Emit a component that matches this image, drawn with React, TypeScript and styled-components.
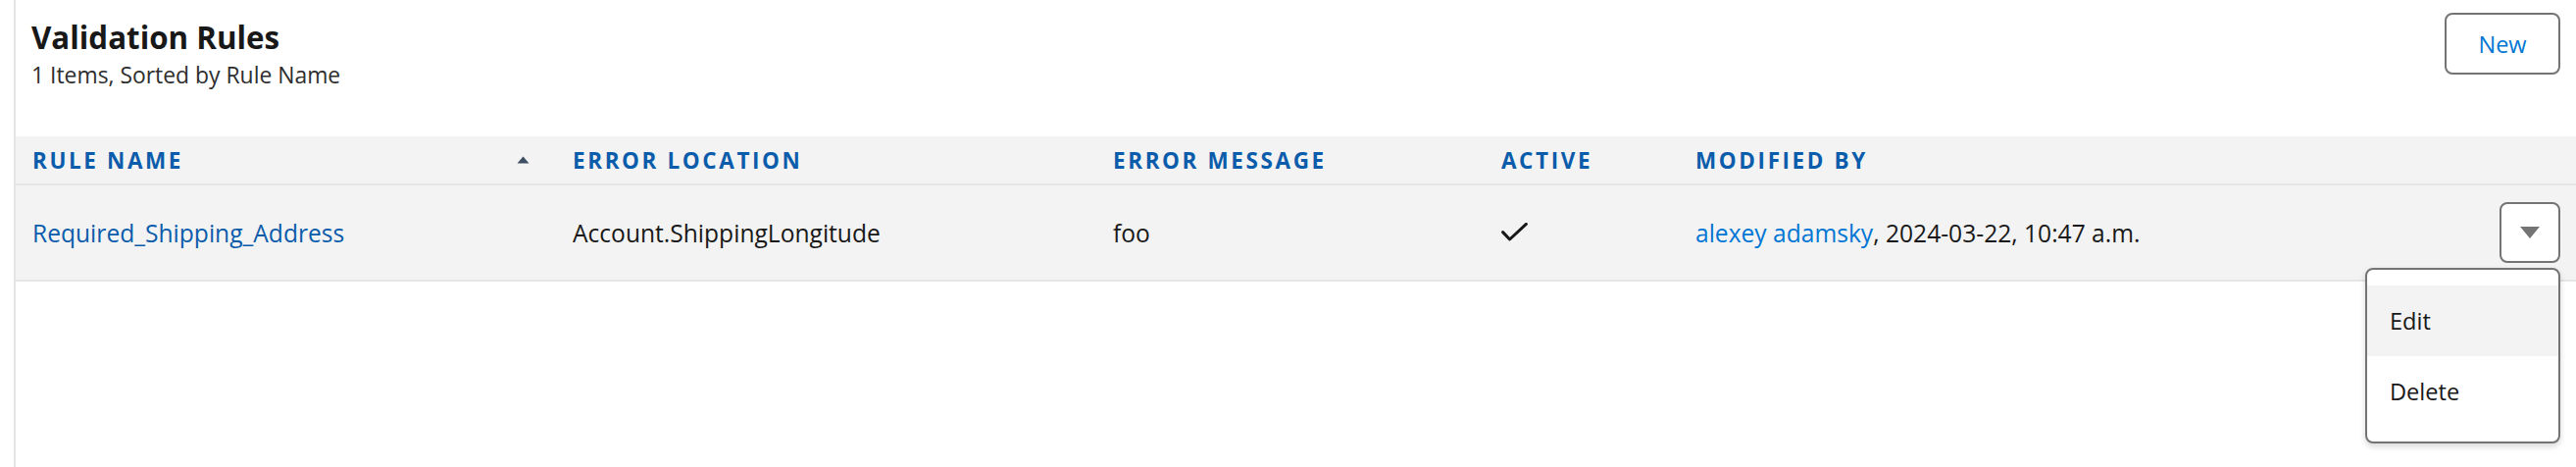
import React from 'react';
import styled, { createGlobalStyle } from 'styled-components';

const GlobalStyle = createGlobalStyle`
  html, body { margin: 0; padding: 0; background: #ffffff; }
  body { font-family: "Open Sans", "Noto Sans", sans-serif; color: #181818; }
  * { box-sizing: border-box; }
`;

const Page = styled.div`
  display: flex;
  min-height: 476px;
  padding-left: 14px;
`;

const Card = styled.section`
  flex: 1;
  display: flex;
  flex-direction: column;
  border-left: 2px solid #e5e5e5;
  min-height: 476px;
`;

const Header = styled.header`
  display: flex;
  justify-content: space-between;
  align-items: flex-start;
  height: 139px;
  padding: 13px 16px 0 16px;
`;

const TitleBlock = styled.div`
  display: flex;
  flex-direction: column;
  padding-top: 5px;
`;

const Title = styled.h1`
  margin: 0;
  font-size: 31.3px;
  line-height: 40px;
  font-weight: 700;
  color: #181818;
`;

const Subtitle = styled.p`
  margin: 3px 0 0 0;
  font-size: 22.9px;
  line-height: 31px;
  color: #2e2e2e;
`;

const OutlineButton = styled.button`
  width: 118px;
  height: 63px;
  border: 2px solid #747474;
  border-radius: 8px;
  background: #ffffff;
  color: #0176d3;
  font-family: inherit;
  font-size: 23.5px;
  cursor: pointer;
`;

const columns = '551px 551px 396px 198px 1fr 97px';

const HeadRow = styled.div`
  display: grid;
  grid-template-columns: ${columns};
  align-items: center;
  height: 50px;
  background: #f3f3f3;
  border-bottom: 2px solid #e5e5e5;
`;

const HeadCell = styled.div<{ $sorted?: boolean }>`
  display: flex;
  align-items: center;
  justify-content: space-between;
  padding: 0 ${(p) => (p.$sorted ? '27px' : '0')} 0 17px;
  font-size: 22.5px;
  font-weight: 700;
  letter-spacing: 2.6px;
  text-transform: uppercase;
  color: #0b5cab;
  white-space: nowrap;
`;

const DataRow = styled.div`
  display: grid;
  grid-template-columns: ${columns};
  align-items: center;
  height: 98px;
  background: #f3f3f3;
  border-bottom: 2px solid #e5e5e5;
`;

const Cell = styled.div`
  padding-left: 17px;
  font-size: 24.6px;
  color: #181818;
  white-space: nowrap;
`;

const Link = styled.a<{ $tone?: 'dark' | 'brand' }>`
  color: ${(p) => (p.$tone === 'brand' ? '#0176d3' : '#0b5cab')};
  text-decoration: none;
`;

const ActionCell = styled.div`
  display: flex;
  justify-content: flex-end;
  padding-right: 16px;
`;

const ActionWrap = styled.div`
  position: relative;
`;

const IconButton = styled.button`
  display: flex;
  align-items: center;
  justify-content: center;
  width: 62px;
  height: 62px;
  padding: 0;
  border: 2px solid #747474;
  border-radius: 8px;
  background: #ffffff;
  cursor: pointer;
`;

const Menu = styled.ul`
  position: absolute;
  top: 67px;
  right: 0;
  z-index: 5;
  width: 199px;
  margin: 0;
  padding: 16px 0 15px 0;
  list-style: none;
  background: #ffffff;
  border: 2px solid #747474;
  border-radius: 8px;
  box-shadow: 0 3px 6px rgba(0, 0, 0, 0.16);
`;

const MenuItem = styled.li<{ $active?: boolean }>`
  display: flex;
  align-items: center;
  height: 72px;
  padding-left: 23px;
  font-size: 23.6px;
  color: #181818;
  background: ${(p) => (p.$active ? '#f3f3f3' : 'transparent')};
`;

const SortArrow = () => (
  <svg width="13" height="8" viewBox="0 0 13 8" aria-hidden="true">
    <polygon points="6.5,0.5 12.5,7.5 0.5,7.5" fill="#3e4f63" />
  </svg>
);

const CheckMark = () => (
  <svg width="27" height="20" viewBox="0 0 27 20" aria-hidden="true">
    <polyline
      points="1.6,9.6 8.6,17 25.4,1.4"
      fill="none"
      stroke="#181818"
      strokeWidth="3"
      strokeLinecap="round"
      strokeLinejoin="round"
    />
  </svg>
);

const DownTriangle = () => (
  <svg width="20" height="12" viewBox="0 0 20 12" aria-hidden="true">
    <polygon points="0,0 20,0 10,12" fill="#747474" />
  </svg>
);

export default function App() {
  return (
    <>
      <GlobalStyle />
      <Page>
        <Card>
          <Header>
            <TitleBlock>
              <Title>Validation Rules</Title>
              <Subtitle>1 Items, Sorted by Rule Name</Subtitle>
            </TitleBlock>
            <OutlineButton>New</OutlineButton>
          </Header>
          <HeadRow>
            <HeadCell $sorted>
              <span>Rule Name</span>
              <SortArrow />
            </HeadCell>
            <HeadCell>Error Location</HeadCell>
            <HeadCell>Error Message</HeadCell>
            <HeadCell>Active</HeadCell>
            <HeadCell>Modified By</HeadCell>
            <HeadCell />
          </HeadRow>
          <DataRow>
            <Cell>
              <Link $tone="dark" href="#">Required_Shipping_Address</Link>
            </Cell>
            <Cell>Account.ShippingLongitude</Cell>
            <Cell>foo</Cell>
            <Cell>
              <CheckMark />
            </Cell>
            <Cell>
              <Link $tone="brand" href="#">alexey adamsky</Link>, 2024-03-22, 10:47 a.m.
            </Cell>
            <ActionCell>
              <ActionWrap>
                <IconButton aria-label="Show actions">
                  <DownTriangle />
                </IconButton>
                <Menu>
                  <MenuItem $active>Edit</MenuItem>
                  <MenuItem>Delete</MenuItem>
                </Menu>
              </ActionWrap>
            </ActionCell>
          </DataRow>
        </Card>
      </Page>
    </>
  );
}
